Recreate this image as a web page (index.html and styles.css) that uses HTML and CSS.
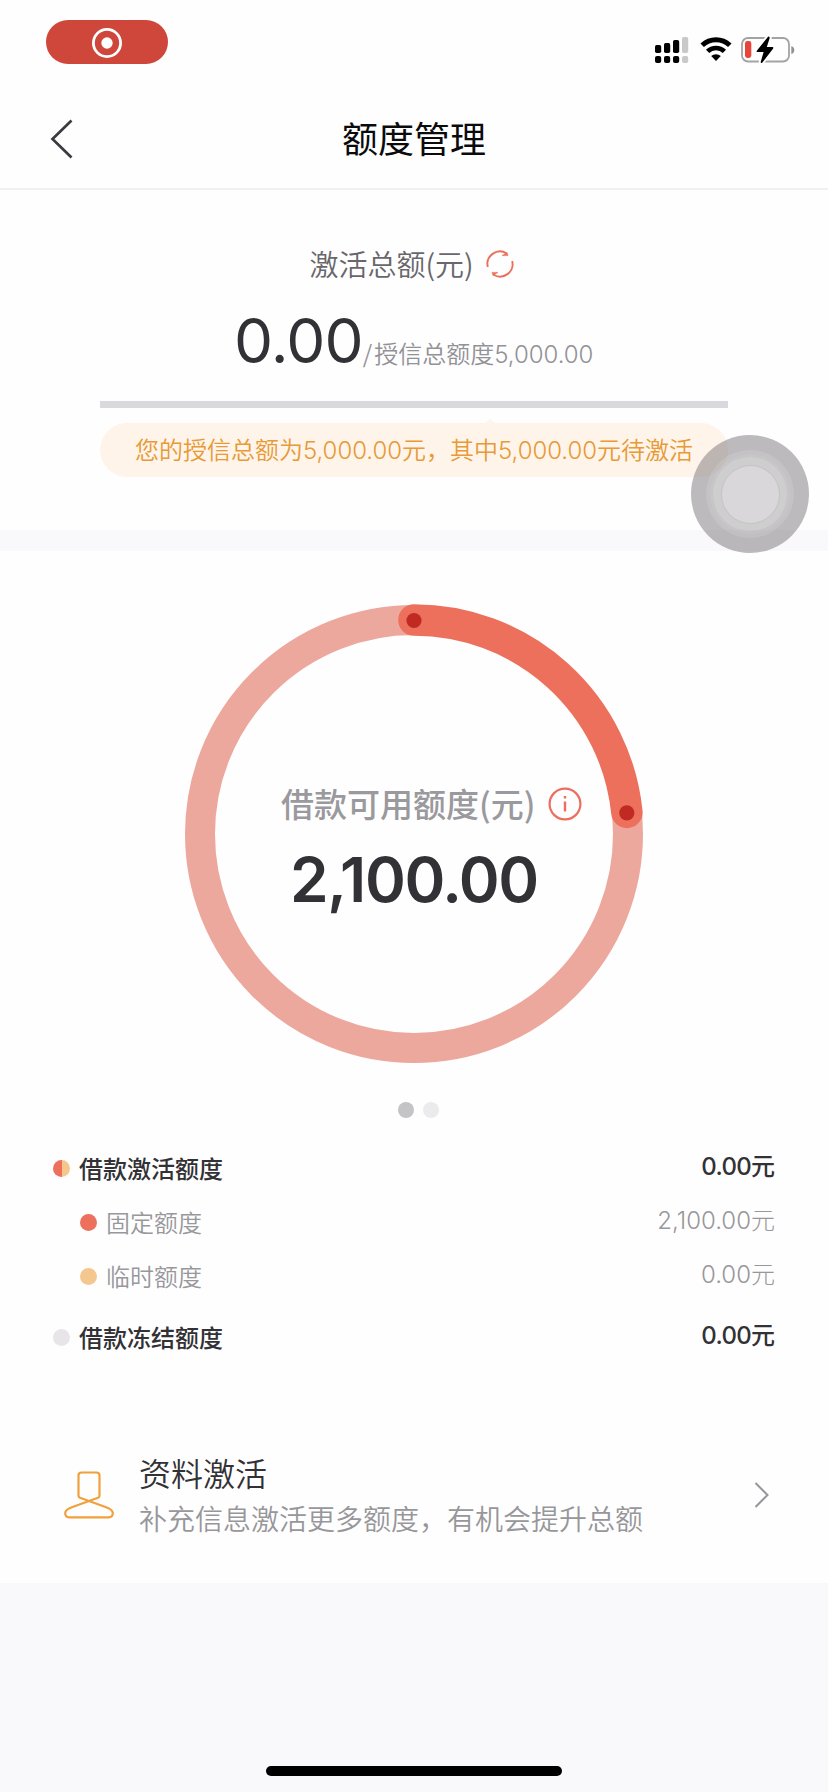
FILE: index.html
```html
<!DOCTYPE html>
<html lang="zh-CN">
<head>
<meta charset="utf-8">
<title>额度管理</title>
<link rel="stylesheet" href="styles.css">
</head>
<body>
<div class="screen">
  <header class="status-bar">
    <div class="record-pill">
      <svg width="32" height="32" viewBox="0 0 32 32"><circle cx="16" cy="16" r="13.6" fill="none" stroke="#fff" stroke-width="2.8"/><circle cx="16" cy="16" r="5.7" fill="#fff"/></svg>
    </div>
    <div class="status-icons">
      <svg class="signal" width="34" height="28" viewBox="0 0 34 28">
        <rect x="0" y="9" width="6.2" height="8" rx="1.7"/><rect x="9" y="7" width="6.2" height="10" rx="1.7"/><rect x="18" y="4" width="6.2" height="13" rx="1.7"/><rect x="27" y="1" width="6.2" height="16" rx="1.7" fill="#c9c9ca"/>
        <rect x="0" y="20" width="6.2" height="7" rx="2"/><rect x="9" y="20" width="6.2" height="7" rx="2"/><rect x="18" y="20" width="6.2" height="7" rx="2"/><rect x="27" y="20" width="6.2" height="7" rx="2" fill="#c9c9ca"/>
      </svg>
      <svg class="wifi" width="32" height="25" viewBox="0 0 32 25">
        <path d="M2.2 8.2a20 20 0 0 1 27.6 0" fill="none" stroke="#000" stroke-width="5"/>
        <path d="M7.6 14.4a12 12 0 0 1 16.8 0" fill="none" stroke="#000" stroke-width="4.6"/>
        <path d="M11.2 19.1a7 7 0 0 1 9.6 0L16 24Z"/>
      </svg>
      <svg class="battery" width="54" height="28" viewBox="0 0 54 28">
        <rect x="1" y="2" width="47" height="23.5" rx="6" fill="none" stroke="#a3a2a5" stroke-width="1.8"/>
        <path d="M50.3 10v8q3-1 3-4t-3-4Z" fill="#929194"/>
        <rect x="4" y="5" width="6.3" height="17" rx="2.4" fill="#e74539"/>
        <path d="M27 .8 16 14.6q-1 1.4.6 1.4h6L19.7 26q0 1.8 1.7.4L32 12.8q1-1.7-.7-1.7h-5.5L28.7 2q0-2.2-1.7-1.2Z" stroke="#fff" stroke-width="4" paint-order="stroke"/>
      </svg>
    </div>
  </header>
  <nav class="nav-bar">
    <svg class="back" width="24" height="42" viewBox="0 0 24 42"><path d="M21.500 2.500 2.500 21l19 18.500" fill="none" stroke="#3b3a40" stroke-width="2.700"/></svg>
    <h1 class="nav-title">额度管理</h1>
  </nav>

  <section class="total">
    <div class="total-label"><span>激活总额(元)</span>
      <svg width="28" height="28" viewBox="0 0 28 28" fill="none" stroke="#eb705c" stroke-width="1.9"><path d="M1.800 17A12.600 12.600 0 0 1 20.500 3.200M26.200 11A12.600 12.600 0 0 1 7.500 24.800"/><path d="M16 5.600h6l-1-3.200ZM12 22.400H6l1 3.200Z" fill="#eb705c" stroke-width=".6"/></svg>
    </div>
    <div class="total-amount"><span class="big">0.00</span><span class="of"><span class="slash">/</span>授信总额度<span class="num">5,000.00</span></span></div>
    <div class="progress"></div>
    <div class="notice">您的授信总额为<span class="num">5,000.00</span>元，其中<span class="num">5,000.00</span>元待激活</div>
    <div class="assistive"><div class="halo"><div class="mid"><div class="core"></div></div></div></div>
  </section>

  <main class="loan">
    <div class="ring">
      <svg class="ring-art" width="462" height="462" viewBox="0 0 462 462">
        <circle cx="231" cy="231" r="214" fill="none" stroke="#eda89e" stroke-width="30"/>
        <path d="M231 17A214 214 0 0 1 443.900 209.400" fill="none" stroke="#ed705c" stroke-width="31.500" stroke-linecap="round"/>
        <circle cx="231" cy="17.500" r="7.600" fill="#c12a23"/><circle cx="443.800" cy="209.800" r="7.600" fill="#c12a23"/>
      </svg>
      <div class="ring-text">
        <div class="ring-label"><span>借款可用额度(元)</span>
          <svg width="34" height="34" viewBox="0 0 34 34"><circle cx="17" cy="17" r="15.400" fill="none" stroke="#ec6f5e" stroke-width="2.200"/><path d="M17 14.500v10M17 9v2.600" stroke="#ec6f5e" stroke-width="2.400"/></svg>
        </div>
        <div class="ring-amount">2,100.00</div>
      </div>
    </div>
    <div class="pager"><i class="on"></i><i></i></div>
    <ul class="list">
      <li class="strong"><i class="dot split"></i><span>借款激活额度</span><b>0.00<em>元</em></b></li>
      <li class="sub"><i class="dot red"></i><span>固定额度</span><b>2,100.00<em>元</em></b></li>
      <li class="sub"><i class="dot gold"></i><span>临时额度</span><b>0.00<em>元</em></b></li>
      <li class="strong last"><i class="dot grey"></i><span>借款冻结额度</span><b>0.00<em>元</em></b></li>
    </ul>
    <div class="entry">
      <svg width="50" height="48" viewBox="0 0 50 48" fill="none" stroke="#f0a03c" stroke-width="2.200" stroke-linejoin="round"><path d="M17.500 1.500h15q3 0 3 3v20q0 1.500-1.500 2.300L8.500 36Q1.200 38.500 1.200 42q0 4.300 4 4.300h39.600q4 0 4-4.300 0-3.500-7.300-6L16 26.800q-1.500-.8-1.500-2.300v-20q0-3 3-3Z"/></svg>
      <div class="entry-text"><h2>资料激活</h2><p>补充信息激活更多额度，有机会提升总额</p></div>
      <svg class="chevron" width="16" height="28" viewBox="0 0 16 28"><path d="m1.500 2 12 12-12 12" fill="none" stroke="#97969a" stroke-width="2"/></svg>
    </div>
  </main>
  <footer class="home"><div class="home-bar"></div></footer>
</div>
</body>
</html>
```

FILE: styles.css
```css
* { box-sizing: border-box; margin: 0; padding: 0; }
body { background: #f9f9fb; }
svg { display: block; flex: none; }
i, em { font-style: normal; }
.screen {
  width: 828px; height: 1792px; overflow: hidden;
  display: flex; flex-direction: column;
  background: #f9f9fb; color: #323135;
  font-family: "Noto Sans CJK SC", "Noto Sans", sans-serif;
  white-space: nowrap;
}
.status-bar {
  height: 90px; flex: none; background: #fefefe;
  display: flex; justify-content: space-between;
  padding: 20px 33px 0 46px;
}
.record-pill {
  width: 122px; height: 44px; border-radius: 22px; background: #cf463a;
  display: flex; align-items: center; justify-content: center; padding-top: 2px;
}
.status-icons { display: flex; padding-top: 16px; }
.wifi { margin: 1px 0 0 11px; }
.battery { margin-left: 9px; }
.nav-bar {
  height: 100px; flex: none; background: #fefefe; border-bottom: 2px solid #f0f0f1;
  display: grid; grid-template-columns: 78px 1fr 78px; align-items: center; padding-bottom: 2px;
}
.back { margin: 2px 0 0 50px; }
.nav-title { color: #0b0a0c; font-size: 36px; line-height: 50px; font-weight: 400; text-align: center; padding-bottom: 3px; }

.total { height: 340px; flex: none; background: #fefefe; padding: 50px 100px 0; position: relative; }
.total-label {
  height: 48px; display: flex; align-items: center; justify-content: center; gap: 12px; padding-right: 5px;
  color: #68676b; font-size: 29px; line-height: 46px; font-weight: 350;
}
.total-label span { padding-bottom: 2px; }
.total-amount { height: 113px; display: flex; padding: 17px 0 0 134px; align-items: baseline; }
.big { font: 400 62px/72px Inter, sans-serif; letter-spacing: -0.8px; }
.of { font-size: 24px; line-height: 40px; font-weight: 350; color: #929196; }
.slash { letter-spacing: 2px; }
.num { font-family: Inter, sans-serif; font-weight: 300; letter-spacing: -0.05px; }
.progress { height: 7px; background: #d9d8dc; }
.notice {
  height: 54px; margin-top: 15px; border-radius: 27px; background: #fef4ea;
  color: #e79a35; font-size: 24px; line-height: 51px; font-weight: 350; text-align: center; position: relative;
}
.notice::before {
  content: ""; position: absolute; left: 384px; top: -4px;
  border: 6px solid transparent; border-top: 0; border-bottom: 5px solid #fef4ea;
}
.assistive, .halo, .mid, .core { border-radius: 50%; display: flex; align-items: center; justify-content: center; }
.assistive { position: absolute; z-index: 2; left: 691px; top: 245px; width: 118px; height: 118px; background: rgba(131, 127, 131, .54); }
.halo { width: 88px; height: 88px; background: rgba(255, 255, 255, .12); }
.mid { width: 74px; height: 74px; background: rgba(255, 255, 255, .2); box-shadow: 0 0 0 3px rgba(255, 255, 255, .06); }
.core { width: 57px; height: 57px; background: #d9d7da; box-shadow: 0 0 0 1px #c5c3c6; }

.loan { margin-top: 21px; height: 1032px; flex: none; background: #fefefe; padding: 52px 0 0; }
.ring { display: grid; width: 462px; height: 462px; margin: 0 auto; }
.ring > * { grid-area: 1 / 1; }
.ring-text { padding: 175px 0 0; }
.ring-label {
  height: 50px; padding-left: 98px; display: flex; align-items: center; gap: 12px;
  color: #9a999d; font-size: 33px; line-height: 50px; font-weight: 500;
}
.ring-label svg { margin-top: 2px; }
.ring-amount { padding-left: 107px; font: 600 62px/76px Inter, sans-serif; margin-top: 14px; letter-spacing: -1.4px; }
.pager { display: flex; justify-content: center; gap: 9px; margin: 37px 0 0 9px; }
.pager i { width: 16px; height: 16px; border-radius: 50%; background: #ebeaec; }
.pager .on { background: #c4c3c6; }
.list { list-style: none; padding: 23px 53px 0 53px; }
.list li { height: 54px; display: flex; align-items: center; font-size: 24px; line-height: 36px; }
.list span { margin-left: 9px; padding-bottom: 1px; }
.list b { margin-left: auto; font-weight: inherit; font-family: Inter, "Noto Sans CJK SC", sans-serif; padding-bottom: 4px; }
.list em { font-family: "Noto Sans CJK SC", sans-serif; letter-spacing: 0; }
.strong { font-weight: 500; }
.strong b { letter-spacing: -0.7px; }
.list .sub { padding-left: 27px; color: #98979b; font-weight: 350; }
.sub b { font-weight: 300; }
.list .last { margin-top: 7px; }
.dot { width: 17px; height: 17px; border-radius: 50%; }
.split { background: linear-gradient(90deg, #ed705c 50%, #f5c78c 50%); }
.red { background: #ed705c; }
.gold { background: #f4c78f; }
.grey { background: #e7e5e8; }
.entry { display: flex; align-items: center; padding: 84px 58px 0 64px; }
.entry > svg { margin-top: 2px; }
.entry-text { margin-left: 25px; }
.entry h2 { font-size: 32px; line-height: 48px; font-weight: 350; }
.entry p { font-size: 28px; line-height: 44px; font-weight: 350; color: #97969a; }
.entry .chevron { margin-left: auto; }
.home { flex: 1; display: flex; justify-content: center; align-items: flex-end; padding-bottom: 16px; }
.home-bar { width: 296px; height: 10px; border-radius: 5px; background: #000; }
```
